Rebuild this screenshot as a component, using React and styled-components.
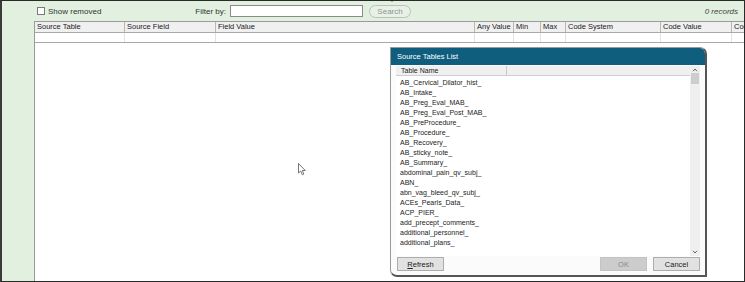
import React from "react";
import styled, { createGlobalStyle } from "styled-components";

const Global = createGlobalStyle`
  html, body { margin: 0; padding: 0; background: #fff; }
  * { box-sizing: border-box; }
  body { font-family: "Liberation Sans", Arial, sans-serif; }
`;

const Frame = styled.div`
  position: relative;
  width: 745px;
  height: 282px;
  background: #e2f0e0;
  border: 1px solid #2a2a2a;
  border-left: 2px solid #3a3a3a;
  display: flex;
  flex-direction: column;
  overflow: hidden;
`;

const Toolbar = styled.div`
  height: 20px;
  display: flex;
  align-items: center;
  padding-left: 35px;
  padding-right: 6px;
  font-size: 8px;
  color: #333;
  flex-shrink: 0;
`;

const Check = styled.span`
  width: 8px;
  height: 8px;
  border: 1px solid #7a7a7a;
  background: #fff;
  margin-right: 3px;
`;

const Label = styled.span`
  color: ${(p) => p.color || "#333"};
  margin-left: ${(p) => p.gap || 0}px;
  font-style: ${(p) => (p.italic ? "italic" : "normal")};
`;

const Input = styled.div`
  width: 133px;
  height: 12px;
  border: 1px solid #8a8a8a;
  background: #fff;
  margin-left: 4px;
`;

const SearchWrap = styled.div`
  position: relative;
  margin-left: 6px;
`;

const SearchBtn = styled.div`
  width: 42px;
  height: 13px;
  border: 1px solid #b8c2b6;
  border-radius: 7px;
  background: #e8f1e6;
  color: #8f958e;
  font-size: 8px;
  display: flex;
  align-items: center;
  justify-content: center;
  margin-top: 1px;
`;

const Notch = styled.svg`
  position: absolute;
  left: 18px;
  top: -7px;
`;

const Spacer = styled.div`
  flex: 1;
`;

const Body = styled.div`
  flex: 1;
  display: flex;
  padding-left: 32px;
`;

const GridArea = styled.div`
  flex: 1;
  background: #fff;
  border-left: 1px solid #9a9a9a;
  border-top: 1px solid #9a9a9a;
  display: flex;
  flex-direction: column;
`;

const HeaderRow = styled.div`
  display: flex;
  height: 11px;
  background: #f0f0f0;
  border-bottom: 1px solid #a8a8a8;
`;

const HeadCell = styled.div`
  width: ${(p) => p.w}px;
  flex-shrink: 0;
  border-right: 1px solid #b8b8b8;
  font-size: 7.5px;
  color: #1a1a1a;
  padding-left: 2px;
  line-height: 10px;
  white-space: nowrap;
  overflow: hidden;
`;

const DataRow = styled.div`
  display: flex;
  height: 10px;
  border-bottom: 1px solid #a8a8a8;
`;

const DataCell = styled.div`
  width: ${(p) => p.w}px;
  flex-shrink: 0;
  border-right: 1px solid #e2e2e2;
`;

const Dialog = styled.div`
  position: absolute;
  left: 388px;
  top: 46px;
  width: 317px;
  height: 230px;
  background: #fbfbfb;
  border: 1px solid #9a9a9a;
  border-right: 2px solid #555;
  border-bottom: 2px solid #555;
  border-radius: 0 7px 0 7px;
  display: flex;
  flex-direction: column;
  overflow: hidden;
`;

const TitleBar = styled.div`
  height: 17px;
  background: #0f5e7e;
  color: #fff;
  font-size: 7.5px;
  padding-left: 6px;
  display: flex;
  align-items: center;
  flex-shrink: 0;
`;

const ListBox = styled.div`
  margin: 1px 5px 0 5px;
  height: 190px;
  display: flex;
  background: #fff;
`;

const ListMain = styled.div`
  flex: 1;
  display: flex;
  flex-direction: column;
`;

const ListHeader = styled.div`
  display: flex;
  height: 10px;
  background: #f0f0f0;
  border-bottom: 1px solid #cfcfcf;
`;

const ListHeadCell = styled.div`
  width: ${(p) => (p.w ? `${p.w}px` : "auto")};
  flex: ${(p) => (p.w ? "0 0 auto" : 1)};
  border-right: ${(p) => (p.w ? "1px solid #c8c8c8" : "none")};
  font-size: 7px;
  color: #1a1a1a;
  padding-left: 5px;
  line-height: 10px;
`;

const ListRows = styled.div`
  padding-top: 2px;
`;

const ListItem = styled.div`
  height: 10px;
  line-height: 10px;
  font-size: 7px;
  color: #1a1a1a;
  padding-left: 4px;
  white-space: nowrap;
`;

const ScrollBar = styled.div`
  width: 10px;
  background: #efefef;
  display: flex;
  flex-direction: column;
  align-items: center;
  padding: 2px 0;
`;

const Thumb = styled.div`
  width: 8px;
  height: 11px;
  background: #cdcdcd;
  margin-top: 1px;
`;

const Footer = styled.div`
  display: flex;
  align-items: center;
  padding: 1px 5px 0 6px;
  gap: 6px;
`;

const Button = styled.div`
  width: 47px;
  height: 14px;
  border: 1px solid ${(p) => (p.disabled ? "#c4c4c4" : "#adadad")};
  background: ${(p) => (p.disabled ? "#cccccc" : "#e1e1e1")};
  color: ${(p) => (p.disabled ? "#8a8a8a" : "#222")};
  font-size: 7.5px;
  display: flex;
  align-items: center;
  justify-content: center;
  u { text-decoration: underline; }
`;

const Cursor = styled.svg`
  position: absolute;
  left: 296px;
  top: 162px;
`;

const columns = [
  { name: "Source Table", w: 90 },
  { name: "Source Field", w: 91 },
  { name: "Field Value", w: 259 },
  { name: "Any Value", w: 39 },
  { name: "Min", w: 27 },
  { name: "Max", w: 25 },
  { name: "Code System", w: 95 },
  { name: "Code Value", w: 71 },
  { name: "Code", w: 40 },
];

const tables = [
  "AB_Cervical_Dilator_hist_",
  "AB_Intake_",
  "AB_Preg_Eval_MAB_",
  "AB_Preg_Eval_Post_MAB_",
  "AB_PreProcedure_",
  "AB_Procedure_",
  "AB_Recovery_",
  "AB_sticky_note_",
  "AB_Summary_",
  "abdominal_pain_qv_subj_",
  "ABN_",
  "abn_vag_bleed_qv_subj_",
  "ACEs_Pearls_Data_",
  "ACP_PIER_",
  "add_precept_comments_",
  "additional_personnel_",
  "additional_plans_",
];

export default function App() {
  return (
    <>
      <Global />
      <Frame>
        <Toolbar>
          <Check />
          <Label>Show removed</Label>
          <Label gap={94}>Filter by:</Label>
          <Input />
          <SearchWrap>
            <Notch width="10" height="6" viewBox="0 0 10 6">
              <path d="M1 1 L5 5 L9 1" fill="none" stroke="#a8b0a6" strokeWidth="1" />
            </Notch>
            <SearchBtn>Search</SearchBtn>
          </SearchWrap>
          <Spacer />
          <Label italic color="#444">0 records</Label>
        </Toolbar>
        <Body>
          <GridArea>
            <HeaderRow>
              {columns.map((c) => (
                <HeadCell key={c.name} w={c.w}>{c.name}</HeadCell>
              ))}
            </HeaderRow>
            <DataRow>
              {columns.map((c) => (
                <DataCell key={c.name} w={c.w} />
              ))}
            </DataRow>
          </GridArea>
        </Body>

        <Cursor width="8" height="13" viewBox="0 0 8 13">
          <path d="M0.5 0.5 L0.5 10 L2.7 8 L4.3 11.8 L5.8 11.1 L4.3 7.5 L7.3 7.5 Z" fill="#fff" stroke="#555" strokeWidth="0.8" />
        </Cursor>

        <Dialog>
          <TitleBar>Source Tables List</TitleBar>
          <ListBox>
            <ListMain>
              <ListHeader>
                <ListHeadCell w={111}>Table Name</ListHeadCell>
                <ListHeadCell />
              </ListHeader>
              <ListRows>
                {tables.map((t) => (
                  <ListItem key={t}>{t}</ListItem>
                ))}
              </ListRows>
            </ListMain>
            <ScrollBar>
              <svg width="6" height="4" viewBox="0 0 6 4">
                <path d="M1 3.2 L3 1 L5 3.2" fill="none" stroke="#555" strokeWidth="0.9" />
              </svg>
              <Thumb />
              <Spacer />
              <svg width="6" height="4" viewBox="0 0 6 4">
                <path d="M1 0.8 L3 3 L5 0.8" fill="none" stroke="#555" strokeWidth="0.9" />
              </svg>
            </ScrollBar>
          </ListBox>
          <Footer>
            <Button><span><u>R</u>efresh</span></Button>
            <Spacer />
            <Button disabled>OK</Button>
            <Button>Cancel</Button>
          </Footer>
        </Dialog>
      </Frame>
    </>
  );
}
